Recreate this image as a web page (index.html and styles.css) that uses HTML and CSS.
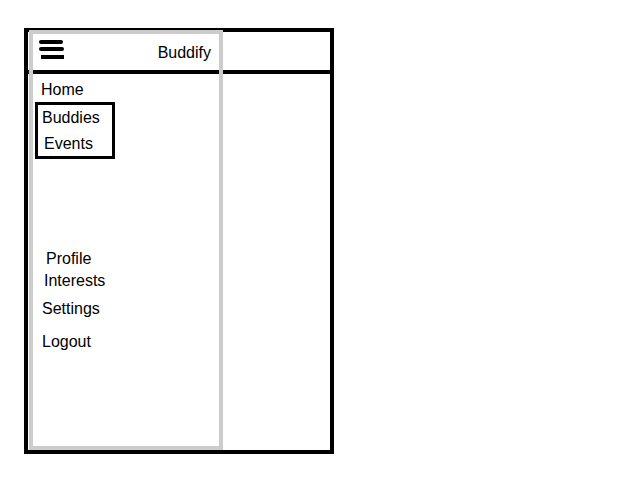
FILE: index.html
```html
<!DOCTYPE html>
<html>
<head>
<meta charset="utf-8">
<title>Buddify</title>
<link rel="stylesheet" href="styles.css">
</head>
<body>
<div class="frame">
  <div class="topbar"></div>
  <aside class="drawer">
    <div class="drawer-head">
      <svg class="burger" width="26" height="20" viewBox="0 0 26 20">
        <rect x="0" y="0" width="24" height="4" rx="2" fill="#000"/>
        <rect x="0" y="7" width="25" height="4" rx="2" fill="#000"/>
        <rect x="2" y="15" width="23" height="4" fill="#000"/>
      </svg>
      <span class="brand">Buddify</span>
    </div>
    <nav class="nav">
      <div class="item item-home">Home</div>
      <div class="group">
        <div class="item item-buddies">Buddies</div>
        <div class="item item-events">Events</div>
      </div>
      <div class="item item-profile">Profile</div>
      <div class="item item-interests">Interests</div>
      <div class="item item-settings">Settings</div>
      <div class="item item-logout">Logout</div>
    </nav>
  </aside>
</div>
</body>
</html>
```

FILE: styles.css
```css
html, body {
  margin: 0;
  padding: 0;
  background: #fff;
}

body {
  font-family: "Liberation Sans", Arial, sans-serif;
  font-size: 16px;
  color: #000;
}

.frame {
  position: relative;
  box-sizing: border-box;
  margin: 28px 0 0 24px;
  width: 310px;
  height: 426px;
  border: 4px solid #000;
}

.topbar {
  height: 38px;
  border-bottom: 4px solid #000;
}

.drawer {
  position: absolute;
  left: 1px;
  top: -2px;
  box-sizing: border-box;
  width: 194px;
  height: 420px;
  border: 4px solid #cccccc;
  display: flex;
  flex-direction: column;
}

.drawer-head {
  height: 36px;
  display: flex;
  align-items: center;
  justify-content: space-between;
  padding: 0 8px 0 6px;
}

.burger {
  align-self: flex-start;
  margin-top: 6px;
  display: block;
}

.brand {
  line-height: 18px;
  margin-top: 2px;
}

.nav {
  padding-top: 11px;
  display: flex;
  flex-direction: column;
  align-items: flex-start;
}

.item {
  line-height: 18px;
  white-space: nowrap;
}

.item-home { margin-left: 8px; }

.group {
  box-sizing: border-box;
  width: 80px;
  margin: 3px 0 0 2px;
  border: 3px solid #000;
  padding: 4px 0 3px 4px;
  display: flex;
  flex-direction: column;
  gap: 8px;
}

.item-events { margin-left: 2px; }

.item-profile { margin: 91px 0 0 13px; }
.item-interests { margin: 4px 0 0 11px; }
.item-settings { margin: 10px 0 0 9px; }
.item-logout { margin: 15px 0 0 9px; }
```
